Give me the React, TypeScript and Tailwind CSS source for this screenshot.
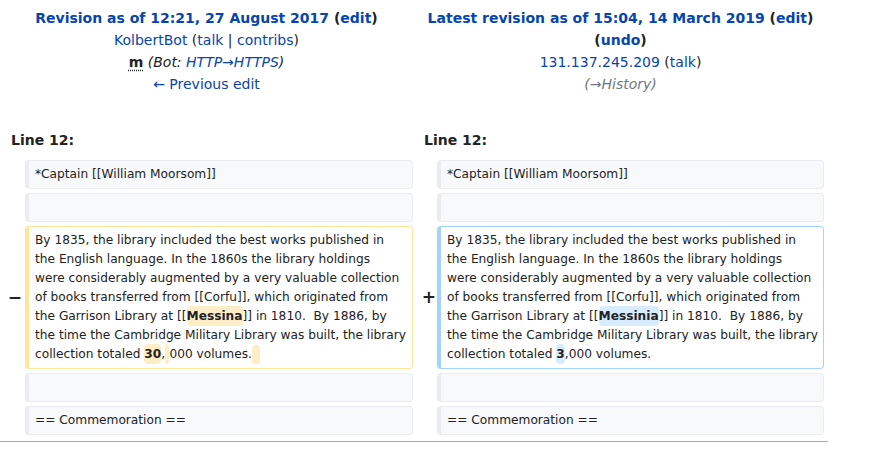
const link = 'text-[#0645ad]';

function Box({ kind, children }: { kind: 'ctx' | 'del' | 'add'; children?: React.ReactNode }) {
  const cls =
    kind === 'ctx'
      ? 'bg-[#f8f9fa] border-[#eaecf0]'
      : kind === 'del'
        ? 'bg-white border-[#ffe49c]'
        : 'bg-white border-[#a3d3ff]';
  return (
    <div
      className={`${cls} border border-l-4 rounded-[4px] py-[4px] pl-[6px] pr-[2px] text-[12.2px] leading-[19px] text-[#222] whitespace-pre min-h-[29px] overflow-hidden`}
    >
      {children}
    </div>
  );
}

function Del({ children }: { children: React.ReactNode }) {
  return <span className="bg-[#feeec8] font-bold rounded-[4px] py-[3px]">{children}</span>;
}

function Add({ children }: { children: React.ReactNode }) {
  return <span className="bg-[#d8ecff] font-bold rounded-[4px] py-[3px]">{children}</span>;
}

function Marker({ sign, right }: { sign?: string; right?: boolean }) {
  return (
    <div
      className={`flex items-center justify-end ${right ? 'pr-[1px]' : 'pr-[3px]'} text-[17px] font-bold text-[#222]`}
    >
      {sign}
    </div>
  );
}

const head =
  'By 1835, the library included the best works published in\nthe English language. In the 1860s the library holdings\nwere considerably augmented by a very valuable collection\nof books transferred from [[Corfu]], which originated from\nthe Garrison Library at [[';
const mid = ']] in 1810.  By 1886, by\nthe time the Cambridge Military Library was built, the library\ncollection totaled ';

export default function App() {
  return (
    <div className="w-[874px] h-[458px] bg-white text-[#222] font-['DejaVu_Sans',sans-serif] overflow-hidden">
      <div className="w-[828px] border-b border-[#a2a9b1] pb-[6px]">
        {/* revision headers */}
        <div className="grid grid-cols-[413px_415px] pt-[7px] text-[14px] leading-[22px] text-center">
          <div>
            <div className="font-bold">
              <span className={link}>Revision as of 12:21, 27 August 2017</span> (<span className={link}>edit</span>)
            </div>
            <div>
              <span className={link}>KolbertBot</span> (<span className={link}>talk</span> |{' '}
              <span className={link}>contribs</span>)
            </div>
            <div>
              <span className="font-bold underline decoration-dotted underline-offset-[3px]">m</span>{' '}
              <span className="italic text-[#222]">
                (Bot: <span className={link}>HTTP→HTTPS</span>)
              </span>
            </div>
            <div className={link}>← Previous edit</div>
          </div>
          <div>
            <div className="font-bold">
              <span className={link}>Latest revision as of 15:04, 14 March 2019</span> (
              <span className={link}>edit</span>)
            </div>
            <div className="font-bold">
              (<span className={link}>undo</span>)
            </div>
            <div>
              <span className={link}>131.137.245.209</span> (<span className={link}>talk</span>)
            </div>
            <div className="italic text-[#72777d]">(→History)</div>
          </div>
        </div>

        {/* line numbers */}
        <div className="grid grid-cols-[413px_415px] mt-[34px] text-[14px] leading-[22px] font-bold">
          <div className="pl-[11px]">Line 12:</div>
          <div className="pl-[11px]">Line 12:</div>
        </div>

        {/* diff rows */}
        <div className="grid grid-cols-[25px_388px_24px_387px] gap-y-[4px] mt-[9px]">
          <Marker />
          <Box kind="ctx">*Captain [[William Moorsom]]</Box>
          <Marker right />
          <Box kind="ctx">*Captain [[William Moorsom]]</Box>

          <Marker />
          <Box kind="ctx" />
          <Marker right />
          <Box kind="ctx" />

          <Marker sign="−" />
          <Box kind="del">
            {head}
            <Del>Messina</Del>
            {mid}
            <Del>30</Del>,<Del> </Del>
            {'000 volumes.'}
            <span className="bg-[#feeec8] rounded-[4px] py-[3px] inline-block w-[8px] leading-[13px]">&nbsp;</span>
          </Box>
          <Marker sign="+" right />
          <Box kind="add">
            {head}
            <Add>Messinia</Add>
            {mid}
            <Add>3</Add>
            {',000 volumes.'}
          </Box>

          <Marker />
          <Box kind="ctx" />
          <Marker right />
          <Box kind="ctx" />

          <Marker />
          <Box kind="ctx">== Commemoration ==</Box>
          <Marker right />
          <Box kind="ctx">== Commemoration ==</Box>
        </div>
      </div>
    </div>
  );
}
